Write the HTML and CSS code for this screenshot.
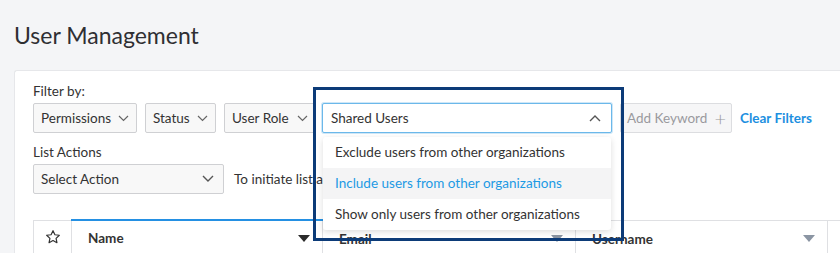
FILE: index.html
```html
<!DOCTYPE html>
<html lang="en">
<head>
    <meta charset="UTF-8">
    <title>User Management</title>
    <link rel="stylesheet" href="styles.css">
</head>
<body>
    <h1 class="page-title">User Management</h1>

    <div class="card">
        <div class="field-label">Filter by:</div>
        <div class="filter-row">
            <button class="filter-btn btn-permissions">Permissions
                <svg class="chev" width="11" height="7" viewBox="0 0 11 7"><path d="M1 1 L5.5 5.5 L10 1" fill="none" stroke="#666" stroke-width="1.2"/></svg>
            </button>
            <button class="filter-btn btn-status">Status
                <svg class="chev" width="11" height="7" viewBox="0 0 11 7"><path d="M1 1 L5.5 5.5 L10 1" fill="none" stroke="#666" stroke-width="1.2"/></svg>
            </button>
            <button class="filter-btn btn-role">User Role
                <svg class="chev" width="11" height="7" viewBox="0 0 11 7"><path d="M1 1 L5.5 5.5 L10 1" fill="none" stroke="#666" stroke-width="1.2"/></svg>
            </button>

            <div class="shared-wrap">
                <div class="shared-select">
                    <span>Shared Users</span>
                    <svg width="12" height="8" viewBox="0 0 12 8"><path d="M1 7 L6 2 L11 7" fill="none" stroke="#555" stroke-width="1.4"/></svg>
                </div>
                <ul class="shared-menu">
                    <li>Exclude users from other organizations</li>
                    <li class="active">Include users from other organizations</li>
                    <li>Show only users from other organizations</li>
                </ul>
                <div class="highlight-frame"></div>
            </div>

            <div class="keyword-box">Add Keyword <span class="plus">+</span></div>
            <a class="clear-link" href="#">Clear Filters</a>
        </div>

        <div class="field-label list-label">List Actions</div>
        <div class="actions-row">
            <div class="action-select">
                <span>Select Action</span>
                <svg width="12" height="8" viewBox="0 0 12 8"><path d="M1 1 L6 6 L11 1" fill="none" stroke="#555" stroke-width="1.4"/></svg>
            </div>
            <span class="actions-hint">To initiate list actions, select one or more users below.</span>
        </div>

        <table class="user-table">
            <thead>
                <tr>
                    <th class="col-star">
                        <svg width="16" height="16" viewBox="0 0 24 24"><path d="M12 2.5l2.9 6.1 6.6.8-4.9 4.6 1.3 6.6L12 17.3l-5.9 3.3 1.3-6.6L2.5 9.4l6.6-.8z" fill="none" stroke="#333" stroke-width="1.8" stroke-linejoin="round"/></svg>
                    </th>
                    <th class="col-name sorted">Name <span class="tri dark"></span></th>
                    <th class="col-email">Email <span class="tri"></span></th>
                    <th class="col-user">Username <span class="tri"></span></th>
                    <th class="col-more"></th>
                </tr>
            </thead>
        </table>
    </div>
</body>
</html>
```

FILE: styles.css
```css
body {
    margin: 0;
    background: #f4f5f7;
    font-family: "Lato", "Liberation Sans", sans-serif;
    color: #333;
    overflow: hidden;
    height: 253px;
}

.page-title {
    margin: 0;
    padding: 21px 0 0 14px;
    height: 70px;
    box-sizing: border-box;
    font-size: 23px;
    font-weight: 400;
    color: #2f2f33;
}

.card {
    margin-left: 14px;
    background: white;
    border: 1px solid #e6e7ea;
    border-right: none;
    border-bottom: none;
    border-radius: 3px 0 0 0;
    padding: 12px 0 0 18px;
    height: 170px;
}

.field-label {
    font-size: 13.5px;
    color: #333;
    height: 20px;
}

.filter-row {
    display: flex;
    align-items: center;
    gap: 8px;
    height: 30px;
}

.filter-btn {
    height: 30px;
    padding: 0 7px 0 7px;
    border: 1px solid #cfd0d3;
    border-radius: 2px;
    background: #f8f8f8;
    font-family: inherit;
    font-size: 13.5px;
    color: #333;
    display: flex;
    align-items: center;
    justify-content: space-between;
    white-space: nowrap;
}

.btn-permissions { width: 104px; }
.btn-status { width: 71px; }
.btn-role { width: 92px; }

.shared-wrap {
    position: relative;
    margin-left: -2px;
}

.shared-select {
    width: 290px;
    height: 30px;
    box-sizing: border-box;
    border: 1px solid #6bb8ea;
    box-shadow: 0 0 0 1px #cfe7f7;
    border-radius: 2px;
    background: white;
    display: flex;
    align-items: center;
    justify-content: space-between;
    padding: 0 10px 0 8px;
    font-size: 13.5px;
    color: #333;
}

.shared-menu {
    position: absolute;
    top: 34px;
    left: 1px;
    width: 288px;
    margin: 0;
    padding: 0;
    list-style: none;
    background: white;
    border-radius: 3px;
    box-shadow: 0 2px 6px rgba(0, 0, 0, 0.14);
    z-index: 2;
}

.shared-menu li {
    height: 31px;
    line-height: 31px;
    padding-left: 12px;
    font-size: 13.5px;
    color: #333;
}

.shared-menu li.active {
    background: #f4f4f5;
    color: #1d9ae4;
}

.highlight-frame {
    position: absolute;
    left: -9px;
    top: -16px;
    width: 305px;
    height: 148px;
    border: 3px solid #0c3b78;
    z-index: 3;
}

.keyword-box {
    width: 112px;
    height: 30px;
    box-sizing: border-box;
    border: 1px solid #dcdde0;
    background: #f6f6f7;
    border-radius: 2px;
    display: flex;
    align-items: center;
    justify-content: space-between;
    padding: 0 5px 0 6px;
    font-size: 13.5px;
    color: #9a9a9e;
}

.plus {
    font-size: 20px;
    font-weight: 300;
    color: #999;
}

.clear-link {
    font-size: 13.5px;
    font-weight: 700;
    color: #1d8fe0;
    text-decoration: none;
}

.list-label {
    margin-top: 11px;
}

.actions-row {
    display: flex;
    align-items: center;
    gap: 10px;
}

.action-select {
    width: 191px;
    height: 30px;
    box-sizing: border-box;
    border: 1px solid #cfd0d3;
    border-radius: 2px;
    background: #f8f8f8;
    display: flex;
    align-items: center;
    justify-content: space-between;
    padding: 0 9px 0 7px;
    font-size: 13.5px;
    color: #333;
}

.actions-hint {
    font-size: 13.5px;
    color: #333;
    white-space: nowrap;
}

.user-table {
    margin-top: 25px;
    border-collapse: collapse;
    table-layout: fixed;
    width: 807px;
}

.user-table th {
    height: 33px;
    box-sizing: border-box;
    border: 1px solid #dfe0e3;
    border-bottom: none;
    background: white;
    text-align: left;
    vertical-align: top;
    font-size: 13.5px;
    font-weight: 700;
    color: #333;
    padding: 10px 12px 0 16px;
    position: relative;
}

.col-star { width: 38px; }
.user-table th.col-star { padding: 8px 0 0 0; text-align: center; }
.col-name { width: 251px; }
.col-email { width: 253px; }
.col-user { width: 252px; }
.col-more { width: 13px; }

.user-table th.sorted {
    border-top: 2px solid #2490e3;
    padding-top: 9px;
}

.tri {
    position: absolute;
    right: 12px;
    top: 14px;
    width: 0;
    height: 0;
    border-left: 6px solid transparent;
    border-right: 6px solid transparent;
    border-top: 7px solid #8b95a3;
}

.tri.dark {
    border-top-color: #2b2b2b;
}
```
